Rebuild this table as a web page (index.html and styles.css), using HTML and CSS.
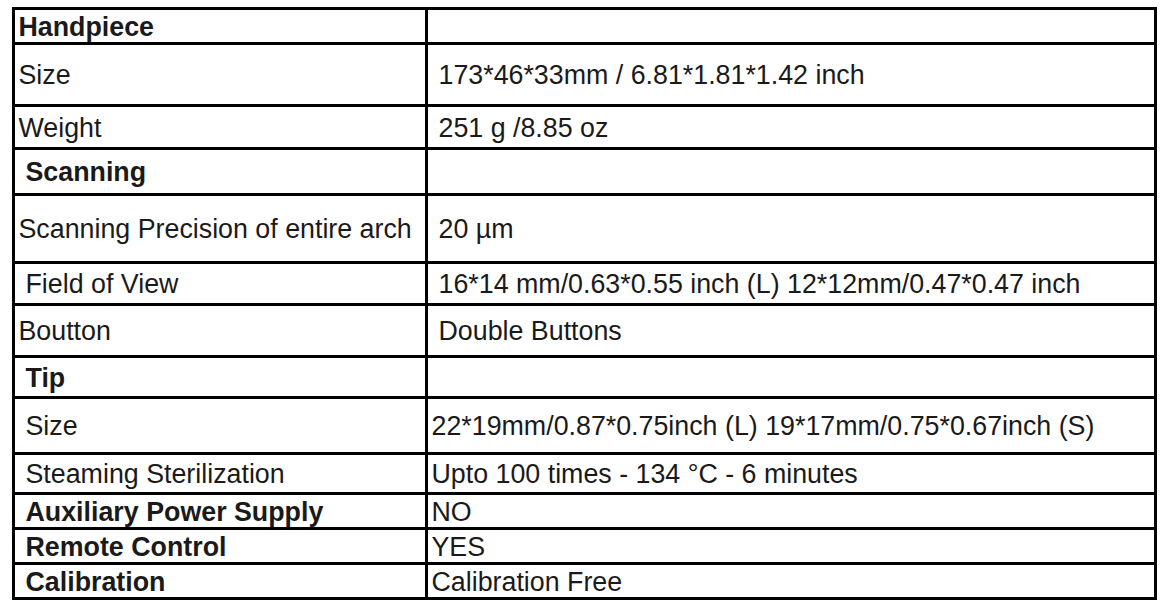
FILE: index.html
```html
<!DOCTYPE html>
<html lang="en">
<head>
<meta charset="utf-8">
<title>Specifications</title>
<link rel="stylesheet" href="styles.css">
</head>
<body>
<table class="spec">
  <tbody>
    <tr class="r1"><td class="k b">Handpiece</td><td class="v"></td></tr>
    <tr class="r2"><td class="k">Size</td><td class="v sp">173*46*33mm / 6.81*1.81*1.42 inch</td></tr>
    <tr class="r3"><td class="k">Weight</td><td class="v sp">251 g /8.85 oz</td></tr>
    <tr class="r4"><td class="k b sp">Scanning</td><td class="v"></td></tr>
    <tr class="r5"><td class="k">Scanning Precision of entire arch</td><td class="v sp">20 µm</td></tr>
    <tr class="r6"><td class="k sp">Field of View</td><td class="v sp">16*14 mm/0.63*0.55 inch (L) 12*12mm/0.47*0.47 inch</td></tr>
    <tr class="r7"><td class="k">Boutton</td><td class="v sp">Double Buttons</td></tr>
    <tr class="r8"><td class="k b sp">Tip</td><td class="v"></td></tr>
    <tr class="r9"><td class="k sp">Size</td><td class="v">22*19mm/0.87*0.75inch (L) 19*17mm/0.75*0.67inch (S)</td></tr>
    <tr class="r10"><td class="k sp">Steaming Sterilization</td><td class="v">Upto 100 times - 134 °C - 6 minutes</td></tr>
    <tr class="r11"><td class="k b sp">Auxiliary Power Supply</td><td class="v">NO</td></tr>
    <tr class="r12"><td class="k b sp">Remote Control</td><td class="v">YES</td></tr>
    <tr class="r13"><td class="k b sp">Calibration</td><td class="v">Calibration Free</td></tr>
  </tbody>
</table>
</body>
</html>
```

FILE: styles.css
```css
html, body {
  margin: 0;
  padding: 0;
  background: #ffffff;
}

body {
  padding: 7px 0 0 12px;
  font-family: "Liberation Sans", Arial, sans-serif;
  font-size: 26.8px;
  color: #1a1a1a;
}

.spec {
  border-collapse: separate;
  border-spacing: 0;
  border-top: 3px solid #000;
  border-left: 3px solid #000;
  width: 1145px;
  table-layout: fixed;
}

.spec td {
  border-bottom: 3px solid #000;
  border-right: 3px solid #000;
  padding: 1px 0 0 3.5px;
  vertical-align: middle;
  white-space: nowrap;
  line-height: 28px;
}

.spec td.k {
  width: 406.5px;
}

.spec td.sp {
  padding-left: 10.5px;
}

.spec td.k.sp {
  width: 399.5px;
}

.spec td.b {
  font-weight: bold;
}

.r1 { height: 35px; }
.r2 { height: 62px; }
.r3 { height: 43px; }
.r4 { height: 46px; }
.r5 { height: 68px; }
.r6 { height: 42px; }
.r7 { height: 52px; }
.r8 { height: 41px; }
.r9 { height: 56px; }
.r10 { height: 40px; }
.r11 { height: 35px; }
.r12 { height: 35px; }
.r13 { height: 35px; }
```
